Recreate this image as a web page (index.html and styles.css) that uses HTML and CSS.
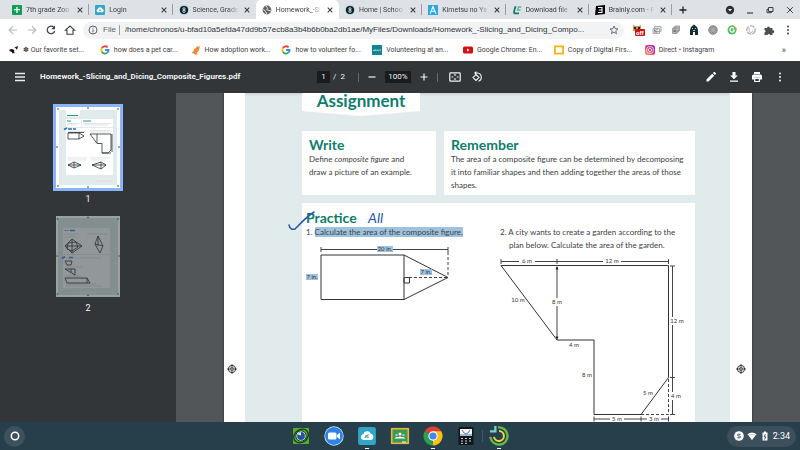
FILE: index.html
```html
<!DOCTYPE html>
<html lang="en">
<head>
<meta charset="utf-8">
<title>Homework_-Slicing_and_Dicing_Composite_Figures.pdf</title>
<link rel="stylesheet" href="styles.css">
</head>
<body>
<svg class="defs" width="0" height="0" aria-hidden="true">
  <defs>
    <symbol id="x" viewBox="0 0 8 8"><path d="M1.7 1.7l4.6 4.6M6.3 1.7L1.7 6.3" stroke="#3c4043" stroke-width="1.1"/></symbol>
    <symbol id="google" viewBox="0 0 10 10"><g fill="none" stroke-width="1.8"><path d="M7.6 2.3A3.6 3.6 0 0 0 1.9 3.2" stroke="#ea4335"/><path d="M1.9 3.2a3.6 3.6 0 0 0 0 3.6" stroke="#fbbc05"/><path d="M1.9 6.8A3.6 3.6 0 0 0 7.4 7.7" stroke="#34a853"/><path d="M7.4 7.7A3.6 3.6 0 0 0 8.6 5H5" stroke="#4285f4"/></g></symbol>
    <symbol id="school" viewBox="0 0 10 10"><circle cx="5" cy="5" r="4.8" fill="#8bd0dc"/><circle cx="5" cy="5" r="4.1" fill="#12222b"/><circle cx="5" cy="3.8" r="1.1" fill="none" stroke="#fff" stroke-width=".8"/><circle cx="5" cy="6.2" r="1.2" fill="none" stroke="#fff" stroke-width=".8"/></symbol>
    <symbol id="dots" viewBox="0 0 12 12"><g fill="currentColor"><circle cx="6" cy="2.4" r="1"/><circle cx="6" cy="6" r="1"/><circle cx="6" cy="9.6" r="1"/></g></symbol>
    <symbol id="mark" viewBox="0 0 10 10"><g fill="none" stroke="#222"><circle cx="5" cy="5" r="3.6" stroke-width=".9"/><path d="M5 0v10M0 5h10" stroke-width=".8"/></g><circle cx="5" cy="5" r="1.9" fill="#222"/><path d="M5 3v4M3 5h4" stroke="#fff" stroke-width=".5"/></symbol>
    <symbol id="cloud" viewBox="0 0 16 16"><rect width="16" height="16" rx="2" fill="#32a6c6"/><path d="M4.6 11.5a2.6 2.6 0 0 1 0-5.1A3.6 3.6 0 0 1 11.4 6a2.8 2.8 0 0 1 .3 5.5z" fill="#fff"/><path d="M6 9.6l3.5-2.8M6.4 7.9h1.7M7.8 9.1h2" stroke="#32a6c6" fill="none"/></symbol>
  </defs>
</svg>

<header>
  <nav class="tabs" aria-label="Tabs">
    <div class="tab-list">
      <div class="tab"><svg viewBox="0 0 10 10"><rect width="10" height="10" rx="1" fill="#0f9d58"/><path d="M5 2v6M2 4.7h6" stroke="#fff" stroke-width="1.3"/></svg><span>7th grade Zoo</span><button aria-label="Close tab"><svg><use href="#x"/></svg></button></div>
      <div class="tab"><svg><use href="#cloud"/></svg><span>Login</span><button aria-label="Close tab"><svg><use href="#x"/></svg></button></div>
      <div class="tab"><svg><use href="#school"/></svg><span>Science, Grade</span><button aria-label="Close tab"><svg><use href="#x"/></svg></button></div>
      <div class="tab active"><svg viewBox="0 0 10 10"><circle cx="5" cy="5" r="4.4" fill="#5f6368"/><path d="M1.2 4.5c1 .3 2 1 2.1 1.8s1.3.7 1.2 2.6M4.2 1c0 1.5 1 1.3 1.6 2s-1.8 1.2-.4 2 1.7.1 3.4.9" stroke="#fff" fill="none"/></svg><span>Homework_-Sl</span><button aria-label="Close tab"><svg><use href="#x"/></svg></button></div>
      <div class="tab"><svg><use href="#school"/></svg><span>Home | Schoo</span><button aria-label="Close tab"><svg><use href="#x"/></svg></button></div>
      <div class="tab"><svg viewBox="0 0 10 10"><rect width="10" height="10" fill="#27a9dc"/><path d="M2.2 8.6L5 1.6l2.8 7M3.4 6.3h3.2" stroke="#fff" stroke-width="1.1" fill="none"/></svg><span>Kimetsu no Ya</span><button aria-label="Close tab"><svg><use href="#x"/></svg></button></div>
      <div class="tab"><svg viewBox="0 0 10 10"><path d="M3.600 1.200Q1 8.500 2.800 8.300H7" stroke="#137a63" stroke-width="1.800" fill="none"/><path d="M9.200 2H6.400L5.600 5H8.500" stroke="#56b7a0" stroke-width="1.300" fill="none"/></svg><span>Download file</span><button aria-label="Close tab"><svg><use href="#x"/></svg></button></div>
      <div class="tab"><svg viewBox="0 0 10 10"><path d="M1 1l9-1v9L0 10z" fill="#000"/><path d="M3 2.500h4v5H3M3.800 5h3" stroke="#fff" stroke-width="1.100" fill="none"/></svg><span>Brainly.com - F</span><button aria-label="Close tab"><svg><use href="#x"/></svg></button></div>
    </div>
    <div class="window-tools">
      <button aria-label="New tab"><svg viewBox="0 0 12 12"><path d="M6 2.500v7M2.500 6h7" stroke="#202124" stroke-width="1.300"/></svg></button>
      <i></i>
      <button aria-label="Search tabs"><svg viewBox="0 0 12 12"><circle cx="6" cy="6" r="4.200" fill="#303236"/><path d="M4 5l2 2.300L8 5z" fill="#fff"/></svg></button>
      <button aria-label="Minimize"><svg viewBox="0 0 12 12"><path d="M3 9h6" stroke="#3c4043" stroke-width="1.200"/></svg></button>
      <button aria-label="Restore"><svg viewBox="0 0 12 12"><path d="M4.500 3.500h4.500v4h-4.500zM4.500 5.200h-1.500v3.500h4.500V7.500" stroke="#3c4043" fill="none"/></svg></button>
      <button aria-label="Close window"><svg viewBox="0 0 12 12"><path d="M3.200 3.200l5.600 5.600M8.800 3.200L3.200 8.800" stroke="#3c4043"/></svg></button>
    </div>
  </nav>

  <div class="address-row">
    <div class="nav-buttons">
      <button aria-label="Back"><svg viewBox="0 0 12 12"><path d="M10 6H2.500M6 2.200L2.200 6 6 9.800" stroke="#b4b7bb" stroke-width="1.100" fill="none"/></svg></button>
      <button aria-label="Forward"><svg viewBox="0 0 12 12"><path d="M2 6h7.500M6 2.200L9.800 6 6 9.800" stroke="#b4b7bb" stroke-width="1.100" fill="none"/></svg></button>
      <button aria-label="Reload"><svg viewBox="0 0 12 12"><path d="M8.900 3.400A3.800 3.800 0 1 0 9.700 7" stroke="#3c4043" stroke-width="1.200" fill="none"/><path d="M10 1.500v3.700H6.300z" fill="#3c4043"/></svg></button>
      <button aria-label="Home"><svg viewBox="0 0 12 12"><path d="M1.500 6.200L6 2l4.500 4.200H9v4H3v-4z" stroke="#3c4043" stroke-width="1.100" fill="none"/></svg></button>
    </div>
    <label class="omnibox">
      <svg viewBox="0 0 10 10"><circle cx="5" cy="5" r="4" fill="none" stroke="#5f6368"/><path d="M5 4.400v3M5 2.500v1" stroke="#5f6368"/></svg>
      <span>File</span>
      <input type="text" aria-label="Address" value="/home/chronos/u-bfad10a5efda47dd9b57ecb8a3b4b6b0ba2db1ae/MyFiles/Downloads/Homework_-Slicing_and_Dicing_Compo...">
      <svg viewBox="0 0 10 10"><path d="M5 1l1.100 2.700 2.900.2-2.200 1.900.7 2.900L5 7.100 2.500 8.700l.7-2.900L1 3.900l2.900-.2z" fill="none" stroke="#5f6368" stroke-width=".9"/></svg>
    </label>
    <div class="extensions">
      <button aria-label="Extension off"><svg viewBox="0 0 12 12"><path d="M1 1l2 1h4l2-1v6H1z" fill="#c89b55"/><path d="M2 3h2v2H2zM6 3h2v2H6z" fill="#222"/></svg><b>off</b></button>
      <button aria-label="Screen capture"><svg viewBox="0 0 12 12"><path d="M3.500 2.500h6.500v5h-6.500zM2 4.500h6.500v5h-6.500z" fill="#eee" stroke="#aaa"/><path d="M3 6.500q3 0 4-2" stroke="#4a90d9" fill="none"/><path d="M3.500 8h3" stroke="#db5746"/></svg></button>
      <button aria-label="Copy pages"><svg viewBox="0 0 12 12"><path d="M5 2h4.500v5H5zM3.700 3.200h4.500v5H3.700zM2.500 4.500H7v5H2.500z" fill="#ddd" stroke="#888" stroke-width=".8"/><path d="M3.800 6h2v2h-2z" fill="#777"/></svg></button>
      <button aria-label="Reader"><svg viewBox="0 0 12 12"><path d="M2 11V6l1-3 3-2.500L9 3l1 3v5H7V8H5v3z" fill="#152b30"/><path d="M4 4h1v1H4zM7 4h1v1H7zM5 6h2v1H5z" fill="#9cd4cf"/></svg></button>
      <button aria-label="Target"><svg viewBox="0 0 12 12"><circle cx="6" cy="6" r="4.200" fill="#aaa" stroke="#777"/><circle cx="6" cy="6" r="2.300" fill="#ccc" stroke="#777" stroke-width=".7"/><path d="M6 3v6M3 6h6" stroke="#888" stroke-width=".6"/></svg></button>
      <button aria-label="Grammar"><svg viewBox="0 0 12 12"><circle cx="6" cy="6" r="4.500" fill="#57bd69"/><path d="M6 1.500A4.500 4.500 0 0 1 10.500 6" stroke="#e9a83c" fill="none"/><path d="M8 4.400A2.300 2.300 0 1 0 8.200 7V6H6.500" stroke="#fff" stroke-width="1.100" fill="none"/></svg></button>
      <button aria-label="Sync"><svg viewBox="0 0 12 12"><circle cx="6" cy="6" r="4.200" fill="none" stroke="#aaa" stroke-width="1.200" stroke-dasharray="5 1"/><path d="M4 4v2.500a2 2 0 0 0 4 0" fill="none" stroke="#bbb"/></svg></button>
      <button aria-label="Extensions"><svg viewBox="0 0 12 12"><path d="M1.500 4H4a1.500 1.500 0 1 1 3 0h2.500v2.300a1.400 1.400 0 1 1 0 2.700v2H7.200a1.400 1.400 0 0 0-2.700 0h-3V8.600a1.400 1.400 0 0 0 0-2.700z" fill="#4c5055"/></svg></button>
      <button aria-label="Menu"><svg><use href="#dots"/></svg></button>
    </div>
  </div>

  <nav class="bookmarks" aria-label="Bookmarks">
    <a href="#"><svg viewBox="0 0 10 10"><path d="M.5 4.500L3 4l2 1 .5 3-2 .5L3 7 .5 6zM5.500 2.500L9 1 8 5 7 3.500z" fill="#111"/></svg><span>✽ Our favorite set...</span></a>
    <a href="#"><svg><use href="#google"/></svg><span>how does a pet car...</span></a>
    <a href="#"><svg viewBox="0 0 10 10"><path d="M9 .5L7.500 2 6 1 5 3 3 4 2.500 6 .5 8l2 .3L4 9.500h3L5.800 8 8 5.500z" fill="#ed8b3b"/></svg><span>How adoption work...</span></a>
    <a href="#"><svg><use href="#google"/></svg><span>how to volunteer fo...</span></a>
    <a href="#"><svg viewBox="0 0 10 10"><rect width="10" height="10" fill="#11868e"/><path d="M1 5.500h1.500L3 4.500l.7 1.500L5 4.700 6 6l1-1h2" stroke="#d8f0f0" stroke-width=".7" fill="none"/></svg><span>Volunteering at an...</span></a>
    <a href="#"><svg viewBox="0 0 10 10"><rect y="1.500" width="10" height="7" rx="1.500" fill="#d40f14"/><path d="M4 3.500v3L6.600 5z" fill="#fff"/></svg><span>Google Chrome: En...</span></a>
    <a href="#"><svg viewBox="0 0 10 10"><rect x=".9" y="1.400" width="8.200" height="7.200" fill="#fff" stroke="#f1b51c" stroke-width="1.800"/></svg><span>Copy of Digital Firs...</span></a>
    <a href="#"><svg viewBox="0 0 10 10"><linearGradient id="ig" x1="1" y1="0" x2="0" y2="1"><stop stop-color="#7338c6"/><stop offset=".5" stop-color="#dc2c75"/><stop offset="1" stop-color="#fbb040"/></linearGradient><rect width="10" height="10" rx="2.500" fill="url(#ig)"/><rect x="1.800" y="1.800" width="6.400" height="6.400" rx="1.800" fill="none" stroke="#fff" stroke-width=".8"/><circle cx="5" cy="5" r="1.600" fill="none" stroke="#fff" stroke-width=".8"/></svg><span>Direct • Instagram</span></a>
    <button aria-label="More bookmarks">»</button>
  </nav>

  <div class="pdf-bar">
    <div class="doc-name">
      <button aria-label="Menu"><svg viewBox="0 0 12 12"><path d="M1 2.500h10M1 6h10M1 9.500h10" stroke="#e8eaed" stroke-width="1.400"/></svg></button>
      <h1>Homework_-Slicing_and_Dicing_Composite_Figures.pdf</h1>
    </div>
    <div class="pdf-controls">
      <input class="page-no" type="text" value="1" aria-label="Page number"><span class="of">/&nbsp; 2</span>
      <i></i>
      <button aria-label="Zoom out"><svg viewBox="0 0 12 12"><path d="M2.500 6h7" stroke="#f1f3f4" stroke-width="1.200"/></svg></button>
      <input class="zoom" type="text" value="100%" aria-label="Zoom level">
      <button aria-label="Zoom in"><svg viewBox="0 0 12 12"><path d="M2.500 6h7M6 2.500v7" stroke="#f1f3f4" stroke-width="1.200"/></svg></button>
      <i></i>
      <button class="fit" aria-label="Fit to page"><svg viewBox="0 0 12 12"><rect x=".8" y="1.800" width="10.400" height="8.400" rx=".8" fill="none" stroke="#f1f3f4" stroke-width="1.200"/><path d="M6 2.800l1.400 1.700H4.600zM6 9.200l1.400-1.700H4.600zM2.500 5.400h1.800v1.200H2.500zM7.700 5.400h1.800v1.200H7.700z" fill="#f1f3f4"/></svg></button>
      <button class="rotate" aria-label="Rotate"><svg viewBox="0 0 12 12"><path d="M5 3.500L8 6.500 5 9.500 2 6.500zM4 2h2.500a4.300 4.300 0 0 1 1 8.300" fill="none" stroke="#f1f3f4" stroke-width="1.100"/><path d="M5.300 0v4L3 2z" fill="#f1f3f4"/></svg></button>
    </div>
    <div class="pdf-actions">
      <button aria-label="Annotate"><svg viewBox="0 0 12 12"><path d="M1.500 8.500v2h2l5.700-5.700-2-2zM7.900 2.100l2 2 1-1a.6.6 0 0 0 0-.8L9.700 1.100a.6.6 0 0 0-.8 0z" fill="#fff"/></svg></button>
      <button aria-label="Download"><svg viewBox="0 0 12 12"><path d="M4.500 1h3v3.500h2.300L6 8.300 2.200 4.500h2.300zM2 9.500h8v1.300H2z" fill="#fff"/></svg></button>
      <button aria-label="Print"><svg viewBox="0 0 12 12"><path d="M3 1h6v2H3zM2.500 3.500h7A1.500 1.500 0 0 1 11 5v3.500H9V6.800H3v1.700H1V5a1.500 1.500 0 0 1 1.500-1.500z" fill="#fff"/><path d="M3.700 7.500h4.600v3H3.700z" fill="none" stroke="#fff" stroke-width="1.200"/></svg></button>
      <button aria-label="More"><svg><use href="#dots"/></svg></button>
    </div>
  </div>
</header>

<main>
  <aside aria-label="Page thumbnails">
    <a class="thumb selected" href="#"><svg viewBox="0 0 64 81">
      <path d="M0 0h64v81H0z" fill="#fff"/><path d="M3 3h58v75H3z" fill="#e2ebeb"/>
      <path d="M10 3h14v7H10zM10 12h15v8H10zM26 12h31v8H26zM10 21h47v47H10z" fill="#fff"/>
      <path d="M11 8.500h11M11 14h4M27 14h8" stroke="#2b9689"/><path d="M11 16.500h12M11 18h10M27 16.500h28M27 18h25M12 24.500h17M34 23.500h20M35 25h18M11 51h20M12 53h18M34 51h20M35 53h14M40 74h17" stroke="#ccd2d2" stroke-width=".6"/>
      <path d="M8 22.500l3-1.500M12 22h4M17 22h3" stroke="#246bbf" stroke-width="1.600"/>
      <path d="M12 26h11v6H12zM23 26l5 3-5 3M12 25.500h16M34 27h21v16l-3 3h-6v-9.500h-5zM41 27v9M46 46h9M56 27v18M12 58l6-3 7 3-7 3zM12 58h13M18 55v6M36 58l9-3 5 3-5 4zM36 58h14M45 55v7" fill="none" stroke="#293131" stroke-width=".8"/>
      <g fill="#333"><circle cx="2" cy="2" r=".8"/><circle cx="32" cy="1" r=".8"/><circle cx="62" cy="2" r=".8"/><circle cx="1" cy="40" r=".8"/><circle cx="63" cy="40" r=".8"/><circle cx="2" cy="79" r=".8"/><circle cx="32" cy="80" r=".8"/><circle cx="62" cy="79" r=".8"/></g>
    </svg></a>
    <p>1</p>
    <a class="thumb" href="#"><svg viewBox="0 0 64 81">
      <path d="M0 0h64v81H0z" fill="#99a1a2"/><path d="M2 2h60v77H2z" fill="#838e8f"/><path d="M7 12h47v26H7zM7 39h47v33H7z" fill="#929899"/>
      <path d="M8 18h15M31 18h20M8 21h12M10 42h35M10 51h17M10 60h15M10 68h30M10 70h36M7 75h16" stroke="#7d8485" stroke-width=".6"/>
      <path d="M14 14.500h5M6 42.500l3-2M13 41.500h4" stroke="#315e91" stroke-width="1.600"/><path d="M8 14.500h5" stroke="#567d83"/>
      <path d="M9 30l7-7 10 7-10 7zM9 30h17M16 23v14M12 27l8-1 2 5-6 4-5-2zM39 28l3-8 5 10-3 7zM39 28l8 2M42 20v10M9 45h7l-1 4h-4zM9 53h10v6zM15 53v3M9 62h22l3 5H11zM31 62v5" fill="none" stroke="#343b3c" stroke-width=".9"/>
      <g fill="#444"><circle cx="1.500" cy="3" r=".8"/><circle cx="32" cy="1.500" r=".8"/><circle cx="62" cy="3" r=".8"/><circle cx="1" cy="40" r=".8"/><circle cx="63" cy="40" r=".8"/><circle cx="1.500" cy="78" r=".8"/><circle cx="32" cy="79.500" r=".8"/><circle cx="62" cy="78" r=".8"/></g>
    </svg></a>
    <p>2</p>
  </aside>

  <div class="viewer">
    <article class="paper">
      <div class="edge"><svg><use href="#mark"/></svg></div>
      <div class="sheet">
        <h2 class="banner">Assignment</h2>
        <div class="cards">
          <section class="card"><h3>Write</h3><p>Define <em>composite figure</em> and<br>draw a picture of an example.</p></section>
          <section class="card"><h3>Remember</h3><p>The area of a composite figure can be determined by decomposing<br>it into familiar shapes and then adding together the areas of those<br>shapes.</p></section>
        </div>
        <section class="practice">
          <svg class="tick" viewBox="0 0 30 22"><path d="M2 15c1 4 3 5 6 4C13 14 19 7 27 2" fill="none" stroke="#2458a8" stroke-width="1.500" stroke-linecap="round"/></svg>
          <div class="question">
            <h3>Practice <span class="ink">All</span></h3>
            <p>1. <mark>Calculate the area of the composite figure.</mark></p>
            <svg class="figure" viewBox="302 240 168 64" width="168" height="64">
              <g class="line"><path d="M321 255h83v44.500h-83zM404 255l44 22.500-44 22"/><path d="M404 277.500h5.500v5.500H404z"/></g>
              <g class="dim"><path d="M321 249.500h127M321 247v5M448 247v5"/><path d="M404 277.500h44M448 252v25" stroke-dasharray="3 2"/></g>
              <g class="hl"><rect x="377" y="246" width="16" height="6"/><rect x="306" y="274" width="12" height="6"/><rect x="420" y="269" width="12" height="6"/></g>
              <g class="label"><text x="385" y="251">20 in.</text><text x="312" y="279">7 in.</text><text x="426" y="274">7 in.</text></g>
            </svg>
          </div>
          <div class="question second">
            <p>2. A city wants to create a garden according to the<br>plan below. Calculate the area of the garden.</p>
            <svg class="figure" viewBox="498 255 190 170" width="190" height="170">
              <g class="line"><path d="M501 265.500h167.500v112L641 414.500h-47V340h-37z"/></g>
              <g class="dim"><path d="M501 261.500h167.500M501 259v5M557 259v5M668.500 259v5M557 267v71M672.500 266v148M670 266h5M670 377.500h5M670 414.500h5M594 419h74.500M594 416.500v5M641 416.500v5M668.500 416.500v5"/><path d="M641 414.500h27.500v-37" stroke-dasharray="3 2"/></g>
              <path d="M557 266l1.500 3.500h-3zM557 340l1.500-3.500h-3z" fill="#222"/>
              <g fill="#fff"><rect x="519" y="258" width="16" height="6"/><rect x="603" y="258" width="18" height="6"/><rect x="550" y="298" width="13" height="8"/><rect x="670" y="317" width="14" height="8"/><rect x="670" y="392" width="13" height="8"/><rect x="610" y="416" width="14" height="7"/><rect x="647" y="416" width="14" height="7"/></g>
              <g class="label"><text x="527" y="263">6 m</text><text x="612" y="263">12 m</text><text x="518" y="302">10 m</text><text x="557" y="304">8 m</text><text x="677" y="323">12 m</text><text x="574" y="347">4 m</text><text x="587" y="377">8 m</text><text x="648" y="395">5 m</text><text x="676" y="398">4 m</text><text x="617" y="421">5 m</text><text x="654" y="421">3 m</text></g>
            </svg>
          </div>
        </section>
      </div>
      <div class="edge"><svg><use href="#mark"/></svg></div>
    </article>
  </div>
</main>

<footer class="shelf">
  <button class="launcher" aria-label="Launcher"><svg viewBox="0 0 12 12"><circle cx="6" cy="6" r="3.700" fill="none" stroke="#fff" stroke-width="1.500"/></svg></button>
  <div class="apps">
    <button aria-label="Camera"><svg viewBox="0 0 20 20"><rect x="2" y="2" width="16" height="16" rx="1" fill="#55ad38"/><ellipse cx="10" cy="10" rx="7.800" ry="6.300" transform="rotate(-35 10 10)" fill="none" stroke="#153b1a" stroke-width="1.300"/><circle cx="10" cy="10" r="5.200" fill="#e7efe9" stroke="#1b3b23"/><circle cx="10" cy="10" r="3.900" fill="#28529b"/><path d="M6.500 8.500a4 4 0 0 1 3.500-2.500v3.500z" fill="#d6e7f8"/></svg></button>
    <button aria-label="Video meeting"><svg viewBox="0 0 20 20"><circle cx="10" cy="10" r="9.700" fill="#dceaff"/><circle cx="10" cy="10" r="9" fill="#2f83e8"/><rect x="4" y="6.500" width="8.500" height="7" rx="1.500" fill="#fff"/><path d="M13 9l3-2.300v6.600L13 11z" fill="#fff"/></svg></button>
    <button class="running" aria-label="Cloud login"><svg viewBox="-1 -1 18 18"><use href="#cloud" width="16" height="16"/></svg></button>
    <button aria-label="Classroom"><svg viewBox="0 0 20 20"><rect x="1.700" y="2.700" width="16.600" height="14.600" fill="#3f9a59" stroke="#e7b93b" stroke-width="1.600"/><circle cx="10" cy="8" r="1.500" fill="#fff"/><circle cx="6.500" cy="9" r="1.100" fill="#b4dac0"/><circle cx="13.500" cy="9" r="1.100" fill="#b4dac0"/><path d="M4.500 12.500q2-2.500 3.500-1.300 2-1.300 4 0 2-1 3.500 1.300z" fill="#fff"/><path d="M12 16h4" stroke="#fff"/></svg></button>
    <button class="running" aria-label="Chrome"><svg viewBox="0 0 20 20"><path d="M10 10L1.800 5.200a9.500 9.500 0 0 1 16.400 0z" fill="#e34133"/><path d="M10 10l8.200-4.800A9.500 9.500 0 0 1 10 19.500z" fill="#fbc116"/><path d="M10 10v9.500A9.500 9.500 0 0 1 1.800 5.200z" fill="#2ca14f"/><path d="M10 5.200h8.200l-4.700 7L10 19.500l4-7z" fill="#fbc116"/><circle cx="10" cy="10" r="4.700" fill="#fff"/><circle cx="10" cy="10" r="3.600" fill="#4285f4"/></svg></button>
    <button aria-label="Calculator"><svg viewBox="0 0 20 20"><rect x="2.500" y="1" width="15" height="18" rx="1" fill="#11161b"/><path d="M4 3h12v7H4z" fill="#f4f4f4"/><path d="M6 4q4 8 8 0M4 9h12" stroke="#5275b3" fill="none"/><path d="M5 12.500h2M9 12.500h2M13 12.500h2M5 15h2M9 15h2M13 15h2M5 17.300h2M9 17.300h2" stroke="#ccc"/></svg></button>
    <i></i>
    <button class="running" aria-label="Goals"><svg viewBox="0 0 22 22"><path d="M1 6h6V0" stroke="#7bd0d2" stroke-width="2.500" fill="none"/><path d="M10 1.500A9.500 9.500 0 1 1 1.500 12" stroke="#67b946" stroke-width="2.600" fill="none"/><path d="M11 5.500A5.500 5.500 0 1 1 5.500 12" stroke="#e8d44a" stroke-width="2.200" fill="none"/><circle cx="11" cy="11" r="2" fill="#1d4b4b"/></svg></button>
  </div>
  <div class="status">
    <svg viewBox="0 0 10 10"><circle cx="5" cy="5" r="4.800" fill="#fff"/><path d="M6.600 3.200H4.400a.9.900 0 0 0 0 1.800h1.200a.9.900 0 0 1 0 1.800H3.400" stroke="#39505c" fill="none"/></svg>
    <svg viewBox="0 0 10 10"><path d="M.5 3.200q4.500-3.400 9 0L5 9z" fill="#fff"/><path d="M1.500 4.300q3.500-2.500 7 0" stroke="#9aa8b0" stroke-width=".6" fill="none"/></svg>
    <svg viewBox="0 0 10 10"><path d="M4 .5h2v1h1.500v8h-5v-8H4z" fill="#fff"/><path d="M5.500 3L4 5.800h2L4.500 8.500" stroke="#2a3e4a" stroke-width=".8" fill="none"/></svg>
    <time>2:34</time>
  </div>
</footer>
</body>
</html>
```
FILE: styles.css
```css
* { box-sizing: border-box; }

body {
  margin: 0;
  height: 100vh;
  display: flex;
  flex-direction: column;
  overflow: hidden;
  font: 8px/12px Roboto, "Liberation Sans", sans-serif;
  color: #3c4043;
  background: #525659;
}

h1, h2, h3, p { margin: 0; }
a { color: inherit; text-decoration: none; }
svg { display: block; flex: none; }
.defs { position: absolute; }

button {
  display: flex;
  align-items: center;
  justify-content: center;
  padding: 0;
  border: 0;
  background: none;
  color: inherit;
  font: inherit;
}

button svg { width: 12px; height: 12px; }

input {
  min-width: 0;
  padding: 0;
  border: 0;
  background: none;
  color: inherit;
  font: inherit;
}

/* Tab strip */
.tabs {
  display: grid;
  grid-template-columns: 1fr 128px;
  height: 19px;
  padding-left: 6px;
  background: #dee1e6;
  font-size: 7px;
}

.tab-list { display: grid; grid-template-columns: repeat(8, 1fr); }

.tab {
  display: flex;
  align-items: center;
  gap: 4px;
  min-width: 0;
  padding: 0 5px 0 6px;
  background: linear-gradient(#9a9da1, #9a9da1) right center / 1px 11px no-repeat;
}

.tab > svg { width: 10px; height: 10px; }

.tab span {
  flex: 1;
  white-space: nowrap;
  -webkit-mask-image: linear-gradient(90deg, #000 75%, transparent);
  mask-image: linear-gradient(90deg, #000 75%, transparent);
}

.tab button svg { width: 8px; height: 8px; }
.tab.active { background: #fff; border-radius: 5px 5px 0 0; }
.tab:has(+ .active) { background: none; }

.window-tools { display: flex; align-items: center; gap: 8px; padding: 0 4px 0 5px; }
.window-tools i { flex: 1; }

/* Address row */
.address-row {
  display: flex;
  align-items: center;
  height: 22px;
  padding: 0 6px 0 7px;
  background: #fff;
}

.nav-buttons { display: flex; gap: 7px; width: 76px; }

.omnibox {
  flex: 1;
  display: flex;
  align-items: center;
  gap: 5px;
  height: 17px;
  min-width: 0;
  padding: 0 5px;
  border-radius: 9px;
  background: #f1f3f4;
  font-family: "Liberation Sans", Arial, sans-serif;
}

.omnibox svg { width: 10px; height: 10px; }
.omnibox span { padding-right: 3px; border-right: 1px solid #9aa0a6; line-height: 10px; color: #5f6368; }
.omnibox input { flex: 1; color: #303236; }

.extensions { display: flex; justify-content: space-between; width: 162px; margin-left: 8px; }
.extensions button { position: relative; }

.extensions b {
  position: absolute;
  left: 3px;
  top: 5px;
  padding: 0 1px;
  border-radius: 1px;
  background: #c5161d;
  color: #fff;
  font-size: 6px;
  line-height: 7px;
}

/* Bookmarks */
.bookmarks {
  display: grid;
  grid-template-columns: repeat(8, 90fr) 62fr;
  align-items: center;
  height: 20px;
  padding: 0 2px 3px 9px;
  background: #fff;
  font-size: 7px;
}

.bookmarks a { display: flex; align-items: center; gap: 4px; min-width: 0; white-space: nowrap; }
.bookmarks a svg { width: 10px; height: 10px; }
.bookmarks button { justify-content: flex-end; padding-right: 12px; font-size: 9px; }

/* PDF toolbar */
.pdf-bar {
  display: grid;
  grid-template-columns: 1fr auto 1fr;
  align-items: center;
  height: 32px;
  padding: 0 14px;
  background: #323639;
  color: #f1f3f4;
}

.doc-name { display: flex; align-items: center; gap: 14px; min-width: 0; }
.doc-name h1 { font-size: 8px; font-weight: 700; white-space: nowrap; }
.pdf-controls { display: flex; align-items: center; gap: 7px; }
.pdf-controls i { width: 1px; height: 9px; background: #64686b; }
.pdf-controls input { height: 12px; background: #191b1c; text-align: center; }
.page-no { width: 13px; }
.of { margin-left: -4px; margin-right: 6px; }
.zoom { width: 26px; }
.pdf-controls .fit { margin-left: 4px; }
.pdf-controls .rotate { margin-left: 3px; }
.pdf-actions { display: flex; justify-content: flex-end; gap: 11px; }

/* Thumbnails and page */
main { flex: 1; display: flex; min-height: 0; overflow: hidden; }

aside {
  flex: none;
  width: 22%;
  padding-top: 11px;
  background: #323639;
  color: #f1f3f4;
  font-size: 9px;
  text-align: center;
}

.thumb { display: block; width: 70px; margin: 0 auto; padding: 3px; }
.thumb svg { width: 64px; height: 81px; }
.thumb.selected { background: #8ab4f8; }
aside p { padding-top: 2px; margin-bottom: 8px; }

.viewer { flex: 1; display: flex; justify-content: center; min-width: 0; }

.paper {
  display: grid;
  grid-template-columns: 21px 1fr 22px;
  width: 100%;
  max-width: 528px;
  background: #fff;
  box-shadow: 0 0 2px #222;
}

.edge { display: flex; justify-content: center; padding: 271px 6px 0 0; }
.edge svg { width: 10px; height: 10px; }
.edge:last-child { padding: 271px 0 0; }

.sheet {
  min-width: 0;
  padding: 0 35px 0 57px;
  background: linear-gradient(#c8d0d1, #e2ebeb 3px);
  font-family: Lato, "Liberation Sans", sans-serif;
  line-height: 13px;
}

.banner {
  width: 118px;
  height: 23px;
  margin-bottom: 15px;
  background: #fff;
  clip-path: polygon(0 0, 100% 0, 100% 78%, 50% 100%, 0 78%);
  color: #0f7c6c;
  font-size: 17px;
  font-weight: 700;
  line-height: 16px;
  text-align: center;
}

.cards { display: grid; grid-template-columns: 134fr 251fr; gap: 8px; margin-bottom: 8px; }
.card { min-height: 64px; padding: 6px 5px 3px 7px; background: #fff; white-space: nowrap; }

h3 { color: #0f7c6c; font-size: 14px; font-weight: 700; line-height: 16px; }

.practice {
  position: relative;
  display: grid;
  grid-template-columns: 196fr 197fr;
  height: 260px;
  padding-top: 7px;
  background: #fff;
}

.question { min-width: 0; white-space: nowrap; }
.question h3, .question p { padding-left: 4px; }
.question .figure { margin-top: 1px; }
.second { padding-top: 16px; }
.question.second p { padding-left: 11px; text-indent: -9px; }
.question.second .figure { margin-top: 3px; }
.tick { position: absolute; left: -15px; top: 7px; width: 30px; height: 22px; }
.ink { margin-left: 8px; color: #2458a8; font-style: italic; font-weight: 400; }
mark { background: #9fc3df; color: inherit; }

.line { fill: none; stroke: #333; stroke-width: 1; }
.dim { fill: none; stroke: #444; stroke-width: 1; }
.hl { fill: #9fc3df; }
.label { fill: #333; font-size: 6px; text-anchor: middle; }

/* Shelf */
.shelf {
  display: grid;
  grid-template-columns: 1fr auto 1fr;
  align-items: center;
  flex: none;
  height: 28px;
  padding: 0 4px;
  background: #273e4b;
}

.launcher { width: 21px; height: 21px; border-radius: 50%; background: #3d525e; }
.apps { display: flex; align-items: center; gap: 13px; }
.apps button { position: relative; }
.apps svg { width: 20px; height: 20px; }
.apps i { width: 1px; height: 12px; margin: 0 -7px; background: #43596a; }

.running::after {
  content: "";
  position: absolute;
  left: 8px;
  bottom: -3px;
  width: 4px;
  height: 1px;
  background: #fff;
}

.status {
  justify-self: end;
  display: flex;
  align-items: center;
  gap: 3px;
  height: 21px;
  padding: 0 6px 0 7px;
  border-radius: 11px;
  background: #3b505c;
  color: #fff;
  font-size: 9px;
}

.status svg { width: 10px; height: 10px; }
```
